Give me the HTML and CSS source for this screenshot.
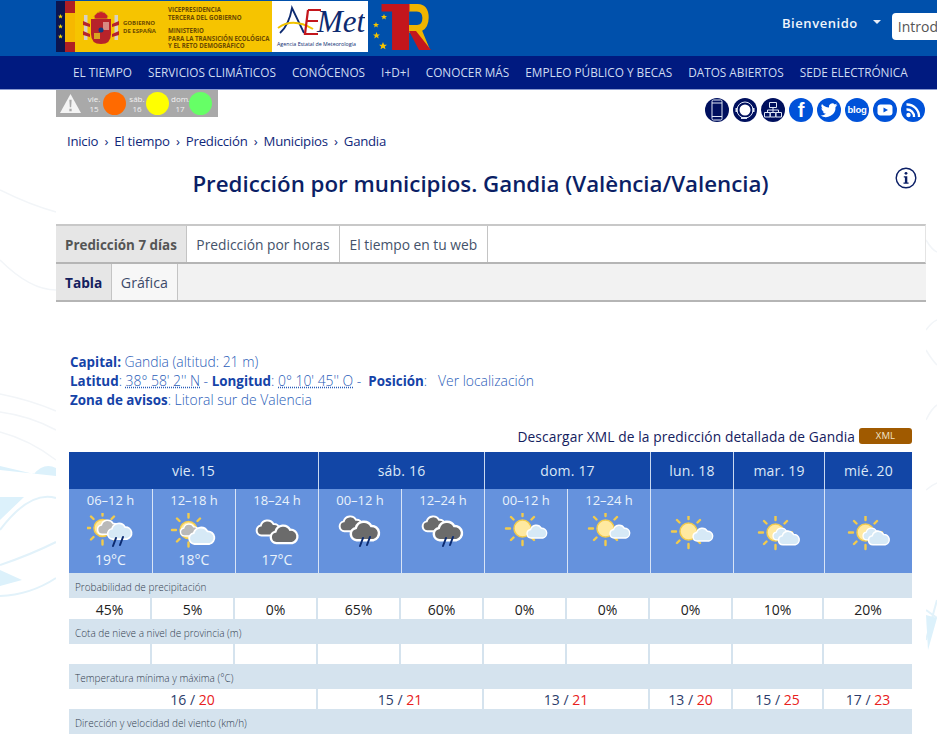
FILE: index.html
```html
<!DOCTYPE html>
<html lang="es">
<head>
<meta charset="utf-8">
<title>Predicción por municipios. Gandia</title>
<link rel="stylesheet" href="styles.css">
</head>
<body>
<svg class="deco" viewBox="0 0 937 736" aria-hidden="true">
  <g class="deco-line">
    <path d="M0 190Q30 205 56 212"/><path d="M0 260Q30 290 56 290"/>
    <path d="M0 394Q30 400 56 411"/><path d="M0 412Q30 416 56 430"/>
    <path d="M0 432Q30 440 56 460"/>
    <path d="M926 240Q932 250 937 252"/><path d="M926 330Q932 322 937 320"/><path d="M926 350Q932 360 937 365"/>
    <path d="M926 420Q932 408 937 405"/><path d="M926 490Q932 485 937 483"/>
  </g>
  <g class="deco-blue">
    <path d="M0 466L34 474Q44 462 56 468V476L0 470Z"/>
    <path d="M0 497L24 497L0 520Z"/>
    <path d="M0 570L22 580L0 586Z"/>
  </g>
  <g class="deco-line-blue">
    <path d="M0 530Q30 490 56 498"/><path d="M0 565Q30 555 56 542"/><path d="M0 596Q30 595 56 578"/>
    <path d="M926 610L937 618M926 640L937 600"/>
  </g>
  <path class="deco-blue" d="M926 615L937 618L928 650Z"/>
</svg>

<svg class="defs" aria-hidden="true">
  <defs>
    <path id="cl" d="M6 18a5.500 5.500 0 0 1-.8-10.900A7.500 7.500 0 0 1 19 5.400 6.400 6.400 0 0 1 21 18z"/>
    <g id="sun">
      <g class="ray">
        <path d="M0-16.500V-12.500M0 12.500V16.500M-16.500 0H-12.500M12.500 0H16.500M-11.500-11.500L-9-9M11.500-11.500L9-9M-11.500 11.500L-9 9M11.500 11.500L9 9"/>
      </g>
      <circle class="sun-disc" r="8.500"/>
    </g>
    <g id="rain"><path class="rain" d="M3 0L0 8M10 -1L7 7"/></g>
  </defs>
  <symbol id="w-few" viewBox="0 0 48 40"><use href="#sun" transform="translate(20.500 15.500)"/><use href="#cl" class="c-light" transform="translate(24.500 11) scale(.78)"/></symbol>
  <symbol id="w-sc" viewBox="0 0 48 40"><use href="#sun" transform="translate(20.500 16.500)"/><use href="#cl" class="c-light" transform="translate(17.500 11) scale(.72)"/><use href="#cl" class="c-light" transform="translate(23 14) scale(.82)"/></symbol>
  <symbol id="w-sg" viewBox="0 0 48 40"><use href="#sun" transform="translate(18.500 17)"/><use href="#cl" class="c-grey" transform="translate(10 10) scale(.72)"/><use href="#cl" class="c-light" transform="translate(18.500 13) scale(1)"/></symbol>
  <symbol id="w-sr" viewBox="0 0 48 40"><use href="#sun" transform="translate(15.500 15)"/><use href="#cl" class="c-grey" transform="translate(10 6) scale(.85)"/><use href="#cl" class="c-light" transform="translate(20 9) scale(.95)"/><use href="#rain" transform="translate(26 25)"/></symbol>
  <symbol id="w-dark" viewBox="0 0 48 40"><use href="#cl" class="c-dark" transform="translate(3 6) scale(.92)"/><use href="#cl" class="c-dark" transform="translate(17 11) scale(1.060)"/></symbol>
  <symbol id="w-rain" viewBox="0 0 48 40"><use href="#cl" class="c-dark" transform="translate(3 2) scale(.9)"/><use href="#cl" class="c-dark" transform="translate(14 7) scale(1.120)"/><use href="#rain" transform="translate(24 25)"/></symbol>
  <symbol id="star" viewBox="-5 -5 10 10"><path d="M0-5L1.400-1.600 5-1.500 2.200.7 3.100 4.200 0 2.200-3.100 4.200-2.200.7-5-1.500-1.400-1.600Z"/></symbol>
</svg>

<header class="top">
  <div class="logos">
    <div class="gov">
      <div class="gov-navy">
        <svg class="gov-star"><use href="#star"/></svg>
        <svg class="gov-star"><use href="#star"/></svg>
        <svg class="gov-star"><use href="#star"/></svg>
      </div>
      <div class="gov-red"></div>
      <svg class="escudo" viewBox="0 0 36 38" aria-hidden="true">
        <path class="e-crown" d="M11 9Q18 0 25 9L24 12H12Z"/>
        <path class="e-red" d="M8 12H28V27Q28 37 18 37 8 37 8 27Z"/>
        <rect class="e-pale" x="20" y="15" width="6" height="8"/>
        <rect class="e-gold" x="11" y="26" width="6" height="6"/>
        <circle class="e-navy" cx="18" cy="23" r="2.500"/>
        <path class="e-pill" d="M1 8H4.500V33H1ZM31.500 8H35V33H31.500Z"/>
        <path class="e-band" d="M0 14L7 17V20L0 18ZM36 14L29 17V20L36 18ZM0 24L7 27V30L0 28ZM36 24L29 27V30L36 28Z"/>
      </svg>
      <div class="gov-name">GOBIERNO<br>DE ESPAÑA</div>
      <div class="gov-min">
        <p>VICEPRESIDENCIA<br>TERCERA DEL GOBIERNO</p>
        <p>MINISTERIO<br>PARA LA TRANSICIÓN ECOLÓGICA<br>Y EL RETO DEMOGRÁFICO</p>
      </div>
    </div>
    <div class="aemet">
      <svg class="aemet-mark" viewBox="0 0 88 36" aria-hidden="true">
        <path class="a-navy" d="M3 28Q12 20 15 3L27 28"/>
        <path class="a-sun" d="M1 23Q16 12 36 24"/>
        <path class="a-red" d="M31 5H44M31 5L28 29H41M30 16H41"/>
        <text class="a-met" x="40" y="27">Met</text>
      </svg>
      <div class="aemet-sub">Agencia Estatal de Meteorología</div>
    </div>
    <div class="tr">
      <svg class="tr-mark" viewBox="0 0 60 51" aria-hidden="true">
        <use href="#star" class="tr-star" x="9" y="13" width="6" height="6"/>
        <use href="#star" class="tr-star" x="1" y="21" width="6" height="6"/>
        <use href="#star" class="tr-star" x="1" y="31" width="7" height="7"/>
        <use href="#star" class="tr-star" x="7" y="41" width="8" height="8"/>
        <text class="tr-r" x="28" y="49" textLength="31" lengthAdjust="spacingAndGlyphs">R</text>
        <text class="tr-t" x="9" y="49" textLength="29" lengthAdjust="spacingAndGlyphs">T</text>
        <path class="tr-leg" d="M26 3H37V49H26ZM37 30H44L59 49H47Z"/>
      </svg>
    </div>
  </div>
  <div class="user">
    <span class="welcome">Bienvenido</span>
    <span class="caret"></span>
    <input class="search" type="text" placeholder="Introduzca un municipio" aria-label="Buscar">
  </div>
</header>

<nav class="mainnav">
  <a>EL TIEMPO</a><a>SERVICIOS CLIMÁTICOS</a><a>CONÓCENOS</a><a>I+D+I</a><a>CONOCER MÁS</a><a>EMPLEO PÚBLICO Y BECAS</a><a>DATOS ABIERTOS</a><a>SEDE ELECTRÓNICA</a>
</nav>

<main class="page">
  <div class="toolbar">
    <div class="alerts">
      <svg class="warn" viewBox="0 0 24 22" aria-hidden="true"><path class="warn-t" d="M12 1L23 21H1Z"/><path class="warn-x" d="M10.800 7H13.200L12.700 15H11.300ZM10.800 16.500H13.200V19H10.800Z"/></svg>
      <span class="a-day">vie.<br>15</span><span class="dot dot-o"></span>
      <span class="a-day">sáb.<br>16</span><span class="dot dot-y"></span>
      <span class="a-day">dom.<br>17</span><span class="dot dot-g"></span>
    </div>
    <div class="social">
      <span class="soc soc-dark"><svg viewBox="0 0 24 24"><rect class="ln" x="7" y="2" width="10" height="20" rx="1.500"/><path class="ln" d="M7 5H17M7 18.500H17"/></svg></span>
      <span class="soc soc-dark"><svg viewBox="0 0 24 24"><circle class="fl-w" cx="12" cy="12" r="5.500"/><circle class="ln" cx="12" cy="12" r="8"/><path class="ln-h" d="M3.500 10V14M20.500 10V14M8 20H14"/></svg></span>
      <span class="soc soc-dark"><svg viewBox="0 0 24 24"><path class="ln" d="M8.500 4.500H15.500V9.500H8.500ZM3.500 14.500H9V19H3.500ZM9.300 14.500H14.700V19H9.300ZM15 14.500H20.500V19H15ZM12 9.500V14.500M6.500 14.500V12H17.500V14.500"/></svg></span>
      <span class="soc soc-blue"><span class="fb">f</span></span>
      <span class="soc soc-blue"><svg viewBox="0 0 24 24"><path class="fl-w" d="M20.500 6.800a6.500 6.500 0 0 1-2 .6A3.400 3.400 0 0 0 20 5.500a6.800 6.800 0 0 1-2.200.9 3.400 3.400 0 0 0-5.800 3.100A9.600 9.600 0 0 1 5 5.900 3.400 3.400 0 0 0 6 10.500 3.200 3.200 0 0 1 4.500 10a3.400 3.400 0 0 0 2.700 3.400 3.200 3.200 0 0 1-1.500.1 3.400 3.400 0 0 0 3.200 2.300A6.800 6.800 0 0 1 3.500 17.400a9.600 9.600 0 0 0 15-8.500 6.900 6.900 0 0 0 2-2.100Z"/></svg></span>
      <span class="soc soc-blue"><span class="blog">blog</span></span>
      <span class="soc soc-blue"><svg viewBox="0 0 24 24"><rect class="fl-w" x="4.500" y="6.500" width="15" height="11" rx="3"/><path class="fl-b" d="M10.500 9.500L15 12 10.500 14.500Z"/></svg></span>
      <span class="soc soc-blue"><svg viewBox="0 0 24 24"><circle class="fl-w" cx="7.500" cy="17" r="2.200"/><path class="ln-w" d="M5.500 11.500A7 7 0 0 1 13 19M5.500 6.500A12 12 0 0 1 18 19"/></svg></span>
    </div>
  </div>

  <div class="crumbs">
    <a>Inicio</a><span class="sep">›</span><a>El tiempo</a><span class="sep">›</span><a>Predicción</a><span class="sep">›</span><a>Municipios</a><span class="sep">›</span><a>Gandia</a>
  </div>

  <div class="title-row">
    <h1>Predicción por municipios. Gandia (València/Valencia)</h1>
    <svg class="info" viewBox="0 0 22 22" aria-hidden="true"><circle class="info-c" cx="11" cy="11" r="9.800"/><circle class="info-f" cx="11" cy="6.300" r="1.400"/><path class="info-f" d="M8.800 9.300H12.300V15.500H13.600V16.800H8.500V15.500H9.900V10.600H8.800Z"/></svg>
  </div>

  <div class="tabs tabs-main">
    <a class="tab tab-on">Predicción 7 días</a><a class="tab">Predicción por horas</a><a class="tab">El tiempo en tu web</a>
  </div>
  <div class="tabs tabs-sub">
    <a class="tab tab-on tab-navy">Tabla</a><a class="tab">Gráfica</a>
  </div>

  <section class="place">
    <div><b>Capital:</b> Gandia (altitud: 21 m)</div>
    <div><b>Latitud</b>: <abbr>38° 58' 2'' N</abbr> - <b>Longitud</b>: <abbr>0° 10' 45'' O</abbr> -&nbsp; <b>Posición</b>: &nbsp;&nbsp;Ver localización</div>
    <div><b>Zona de avisos</b>: Litoral sur de Valencia</div>
  </section>

  <div class="xml">
    <span>Descargar XML de la predicción detallada de Gandia</span><a class="xml-btn">XML</a>
  </div>

  <table class="fc">
    <colgroup>
      <col class="c83"><col class="c83"><col class="c83"><col class="c83"><col class="c83"><col class="c83"><col class="c83"><col class="c83"><col class="c91"><col class="c88">
    </colgroup>
    <tr class="days">
      <th colspan="3">vie. 15</th><th colspan="2">sáb. 16</th><th colspan="2">dom. 17</th><th>lun. 18</th><th>mar. 19</th><th>mié. 20</th>
    </tr>
    <tr class="sky">
      <td><div class="h">06–12 h</div><svg class="wi"><use href="#w-sr"/></svg><div class="t">19°C</div></td>
      <td><div class="h">12–18 h</div><svg class="wi"><use href="#w-sg"/></svg><div class="t">18°C</div></td>
      <td><div class="h">18–24 h</div><svg class="wi"><use href="#w-dark"/></svg><div class="t">17°C</div></td>
      <td><div class="h">00–12 h</div><svg class="wi"><use href="#w-rain"/></svg><div class="t"></div></td>
      <td><div class="h">12–24 h</div><svg class="wi"><use href="#w-rain"/></svg><div class="t"></div></td>
      <td><div class="h">00–12 h</div><svg class="wi"><use href="#w-few"/></svg><div class="t"></div></td>
      <td><div class="h">12–24 h</div><svg class="wi"><use href="#w-few"/></svg><div class="t"></div></td>
      <td><div class="h"></div><svg class="wi wi-low"><use href="#w-few"/></svg><div class="t"></div></td>
      <td><div class="h"></div><svg class="wi wi-low"><use href="#w-sc"/></svg><div class="t"></div></td>
      <td><div class="h"></div><svg class="wi wi-low"><use href="#w-sc"/></svg><div class="t"></div></td>
    </tr>
    <tr class="lab"><td colspan="10">Probabilidad de precipitación</td></tr>
    <tr class="val">
      <td>45%</td><td>5%</td><td>0%</td><td>65%</td><td>60%</td><td>0%</td><td>0%</td><td>0%</td><td>10%</td><td>20%</td>
    </tr>
    <tr class="lab"><td colspan="10">Cota de nieve a nivel de provincia (m)</td></tr>
    <tr class="val val-low">
      <td></td><td></td><td></td><td></td><td></td><td></td><td></td><td></td><td></td><td></td>
    </tr>
    <tr class="lab"><td colspan="10">Temperatura mínima y máxima (°C)</td></tr>
    <tr class="val val-low val-t">
      <td colspan="3">16 / <em>20</em></td><td colspan="2">15 / <em>21</em></td><td colspan="2">13 / <em>21</em></td><td>13 / <em>20</em></td><td>15 / <em>25</em></td><td>17 / <em>23</em></td>
    </tr>
    <tr class="lab"><td colspan="10">Dirección y velocidad del viento (km/h)</td></tr>
  </table>
</main>
</body>
</html>
```

FILE: styles.css
```css
* { box-sizing: border-box; }
html, body { height: 736px; }
body {
  margin: 0;
  overflow: hidden;
  position: relative;
  background: #fff;
  font-family: "Open Sans", "Liberation Sans", sans-serif;
  color: #0b1f66;
}
p { margin: 0; }
.deco { position: absolute; left: 0; top: 0; width: 937px; height: 736px; }
.deco-line path { fill: none; stroke: #f2f5f8; stroke-width: 1.500; }
.deco-blue, .deco-blue path { fill: #dcf1fb; }
.deco-line-blue path { fill: none; stroke: #e2f2fa; stroke-width: 2; }
.defs { position: absolute; width: 0; height: 0; }

/* weather parts */
.ray path { fill: none; stroke: #f2cb4c; stroke-width: 2.400; stroke-linecap: round; }
.sun-disc { fill: #ffe9a0; stroke: #f2cb4c; stroke-width: 1.500; }
.c-light { fill: #d6e9f6; stroke: #fff; stroke-width: 1.800; }
.c-grey { fill: #b9b9b9; stroke: #fff; stroke-width: 1.800; }
.c-dark { fill: #6b6b6b; stroke: #fff; stroke-width: 2.200; }
.rain { fill: none; stroke: #0b2a70; stroke-width: 2; stroke-linecap: round; }

/* header */
.top {
  position: relative;
  display: flex;
  height: 56px;
  padding-left: 56px;
  background: #0050ab;
}
.logos { display: flex; flex: none; height: 51px; margin-top: 1px; }
.gov {
  display: flex;
  flex: none;
  width: 216px;
  background: #f6c400;
  color: #6b4a00;
  font-weight: 700;
  font-size: 6.100px;
  line-height: 7.500px;
}
.gov-navy {
  display: flex; flex: none; flex-direction: column; align-items: center; justify-content: center; gap: 5px;
  width: 9px; background: #0b1550;
}
.gov-star { width: 5px; height: 5px; fill: #f6d400; }
.gov-red {
  flex: none;
  width: 10px;
  background: linear-gradient(#b01f24 0 24%, #f6b800 24% 80%, #b01f24 80%);
}
.escudo { flex: none; width: 36px; height: 38px; margin: 6px 0 0 8px; }
.e-crown { fill: #c8202a; stroke: #d69a10; }
.e-red { fill: #b7232a; }
.e-pale { fill: #d88a84; }
.e-gold { fill: #d9a520; }
.e-navy { fill: #123a80; }
.e-pill { fill: #d7d2c4; }
.e-band { fill: #b7232a; }
.gov-name { flex: none; width: 45px; margin: 19px 0 0 4px; font-size: 6px; }
.gov-min { display: flex; flex-direction: column; gap: 6px; margin-top: 5px; white-space: nowrap; }
.aemet { flex: none; width: 96px; background: #fff; padding: 4px 2px 0 5px; }
.aemet-mark { display: block; width: 88px; height: 36px; }
.a-navy { fill: none; stroke: #0d2a70; stroke-width: 1.800; }
.a-sun { fill: none; stroke: #f2c400; stroke-width: 2; }
.a-red { fill: none; stroke: #c4161c; stroke-width: 2.200; }
.a-met { font-family: "Liberation Serif", serif; font-style: italic; font-size: 31px; fill: #0d2a70; }
.aemet-sub { font-size: 5.300px; line-height: 6px; color: #0d2a70; white-space: nowrap; }
.tr { flex: none; width: 64px; padding-left: 4px; }
.tr-mark { display: block; width: 60px; height: 51px; overflow: visible; }
.tr-star { fill: #f5c400; }
.tr-t { font-family: "Liberation Sans", sans-serif; font-weight: 700; font-size: 66px; fill: #c4161c; }
.tr-r { font-family: "Liberation Sans", sans-serif; font-weight: 700; font-size: 66px; fill: #f0b400; }
.tr-leg { fill: #c4161c; }
.user { display: flex; flex: none; align-items: flex-start; margin-left: 350px; }
.welcome {
  margin-top: 13px;
  font-size: 13px;
  line-height: 20px;
  font-weight: 600;
  letter-spacing: .55px;
  color: #f0f5fb;
}
.caret {
  width: 0; height: 0;
  margin: 20px 0 0 15px;
  border-left: 4.500px solid transparent;
  border-right: 4.500px solid transparent;
  border-top: 4px solid #e8eef8;
}
.search {
  width: 220px; height: 27px;
  margin: 13px 0 0 11px;
  padding: 0 6px;
  border: 0;
  border-radius: 4px;
  background: #fff;
  font: 14px "Open Sans", sans-serif;
}
.search::placeholder { color: #555; opacity: 1; }

/* nav */
.mainnav {
  position: relative;
  display: flex;
  gap: 16px;
  height: 34px;
  padding-left: 73px;
  padding-bottom: 1px;
  align-items: center;
  background: #001a80;
  border-bottom: 1px solid #8b9bd0;
  font-size: 11.800px;
  color: #cfdcf2;
  white-space: nowrap;
}

/* page */
.page {
  position: relative;
  width: 870px;
  height: 647px;
  margin-left: 56px;
  background: #fff;
}
.toolbar { display: flex; justify-content: space-between; align-items: flex-start; height: 36px; }
.alerts {
  display: flex;
  align-items: center;
  width: 162px;
  height: 27px;
  padding-left: 3px;
  background: #a9a9a9;
  color: #f2f2f2;
  font-size: 8px;
  line-height: 9.500px;
  text-align: center;
}
.warn { flex: none; width: 23px; height: 21px; margin-right: 3px; }
.warn-t { fill: #f4f4f4; }
.warn-x { fill: #a9a9a9; }
.a-day { flex: none; width: 18px; }
.dot { flex: none; width: 23px; height: 23px; margin-right: 2px; border-radius: 50%; }
.dot-o { background: #ff6a00; }
.dot-y { background: #ffff00; }
.dot-g { background: #66ff66; }
.social { display: flex; gap: 4px; margin: 8px 1px 0 0; }
.soc {
  display: flex; align-items: center; justify-content: center;
  width: 24px; height: 24px;
  border-radius: 50%;
  overflow: hidden;
  color: #fff;
}
.soc svg { width: 24px; height: 24px; display: block; }
.soc-dark { background: #00105e; }
.soc-blue { background: #0052d9; }
.ln { fill: none; stroke: #dfe6f5; stroke-width: 1; }
.ln-h { fill: none; stroke: #dfe6f5; stroke-width: 2; }
.ln-w { fill: none; stroke: #fff; stroke-width: 2.400; }
.fl-w { fill: #fff; }
.fl-b { fill: #0052d9; }
.fb { font: 700 20px/24px "Liberation Sans", sans-serif; }
.blog { font: 700 9.500px/24px "Liberation Sans", sans-serif; letter-spacing: -.2px; }

.crumbs {
  display: flex;
  align-items: center;
  height: 30px;
  padding-left: 11px;
  font-size: 13.200px;
  letter-spacing: -.25px;
  color: #10287a;
  white-space: nowrap;
}
.sep { margin: 0 6.200px; }

.title-row { position: relative; height: 68px; padding-top: 13px; text-align: center; }
h1 {
  margin: 0 0 0 -21px;
  font-size: 22.300px;
  line-height: 29px;
  font-weight: 600;
  color: #0b1f66;
}
.info { position: absolute; right: 9px; top: 11px; width: 22px; height: 22px; }
.info-c { fill: none; stroke: #0b1f66; stroke-width: 1.400; }
.info-f { fill: #0b1f66; }

.tabs {
  display: flex;
  border-bottom: 2px solid #b5b5b5;
  font-size: 13.800px;
  white-space: nowrap;
}
.tabs-main { height: 40px; background: #fff; border-top: 2px solid #c8c8c8; border-right: 1px solid #e4e4e4; color: #44526a; }
.tabs-sub { height: 38px; background: #f2f2f2; color: #3c4a6a; }
.tab {
  display: flex;
  align-items: center;
  padding: 0 9.500px;
  border-right: 1px solid #c4c4c4;
  background: #fff;
}
.tabs-sub .tab { background: #f7f7f7; padding: 0 9px; font-size: 14.200px; }
.tabs .tab-on { background: #e6e6e6; font-weight: 700; font-size: 13.400px; color: #555; padding: 1px 9px 0; }
.tabs-sub .tab-on { background: #e6e6e6; font-size: 13.700px; padding: 0 8.500px 0 9px; }
.tabs .tab-navy { color: #14205e; }

.place {
  padding: 50px 0 0 14px;
  font-size: 13.900px;
  line-height: 19px;
  font-weight: 300;
  color: #2a5db8;
}
.place b { font-size: 13.400px; line-height: 1; font-weight: 700; color: #1543a8; }
.place abbr { text-decoration: underline dotted; }

.xml {
  display: flex;
  justify-content: flex-end;
  align-items: center;
  gap: 4px;
  height: 22px;
  margin: 16px 14px 5px 0;
  font-size: 13.750px;
  color: #14205e;
  letter-spacing: .1px;
}
.xml-btn {
  width: 53px; height: 16px;
  border-radius: 3px;
  background: #a05a00;
  color: #f2e4c8;
  font-size: 9.500px;
  line-height: 16px;
  text-align: center;
}

.fc { width: 843px; margin-left: 13px; table-layout: fixed; border-collapse: separate; border-spacing: 0; }
.c83 { width: 83px; } .c88 { width: 88px; } .c91 { width: 91px; }
.fc th {
  height: 37px;
  padding: 0;
  background: #1246a6;
  border-left: 1px solid #c8d8f0;
  color: #dce8f6;
  font-size: 14px;
  font-weight: 400;
  letter-spacing: .2px;
}
.fc th:first-child { border-left: 0; }
.sky td {
  height: 84px;
  padding: 0;
  background: #6592dd;
  border-left: 1px solid #d8e4f6;
  color: #eaf2fb;
  font-size: 14px;
  text-align: center;
  vertical-align: top;
}
.sky td:first-child { border-left: 0; }
.h { height: 24px; font-size: 13px; line-height: 22px; }
.t { height: 20px; line-height: 20px; margin-top: -3px; }
.wi { display: block; width: 48px; height: 40px; margin: 0 auto; }
.wi-low { margin-top: 3px; margin-bottom: -3px; }
.lab td {
  height: 25px;
  padding: 2px 0 0 6px;
  background: #d5e3ee;
  font-size: 10px;
  font-weight: 300;
  color: #33404f;
}
.val td {
  height: 21px;
  padding: 1px 0 0;
  background: #fff;
  border-right: 2px solid #d5e3ee;
  font-size: 14px;
  line-height: 19px;
  text-align: center;
  color: #222;
}
.val td:last-child { border-right: 0; }
.val-low td { height: 20px; padding-top: 0; }
.val-t td { color: #2c3c6a; }
.val-t em { font-style: normal; color: #e82020; }
```
